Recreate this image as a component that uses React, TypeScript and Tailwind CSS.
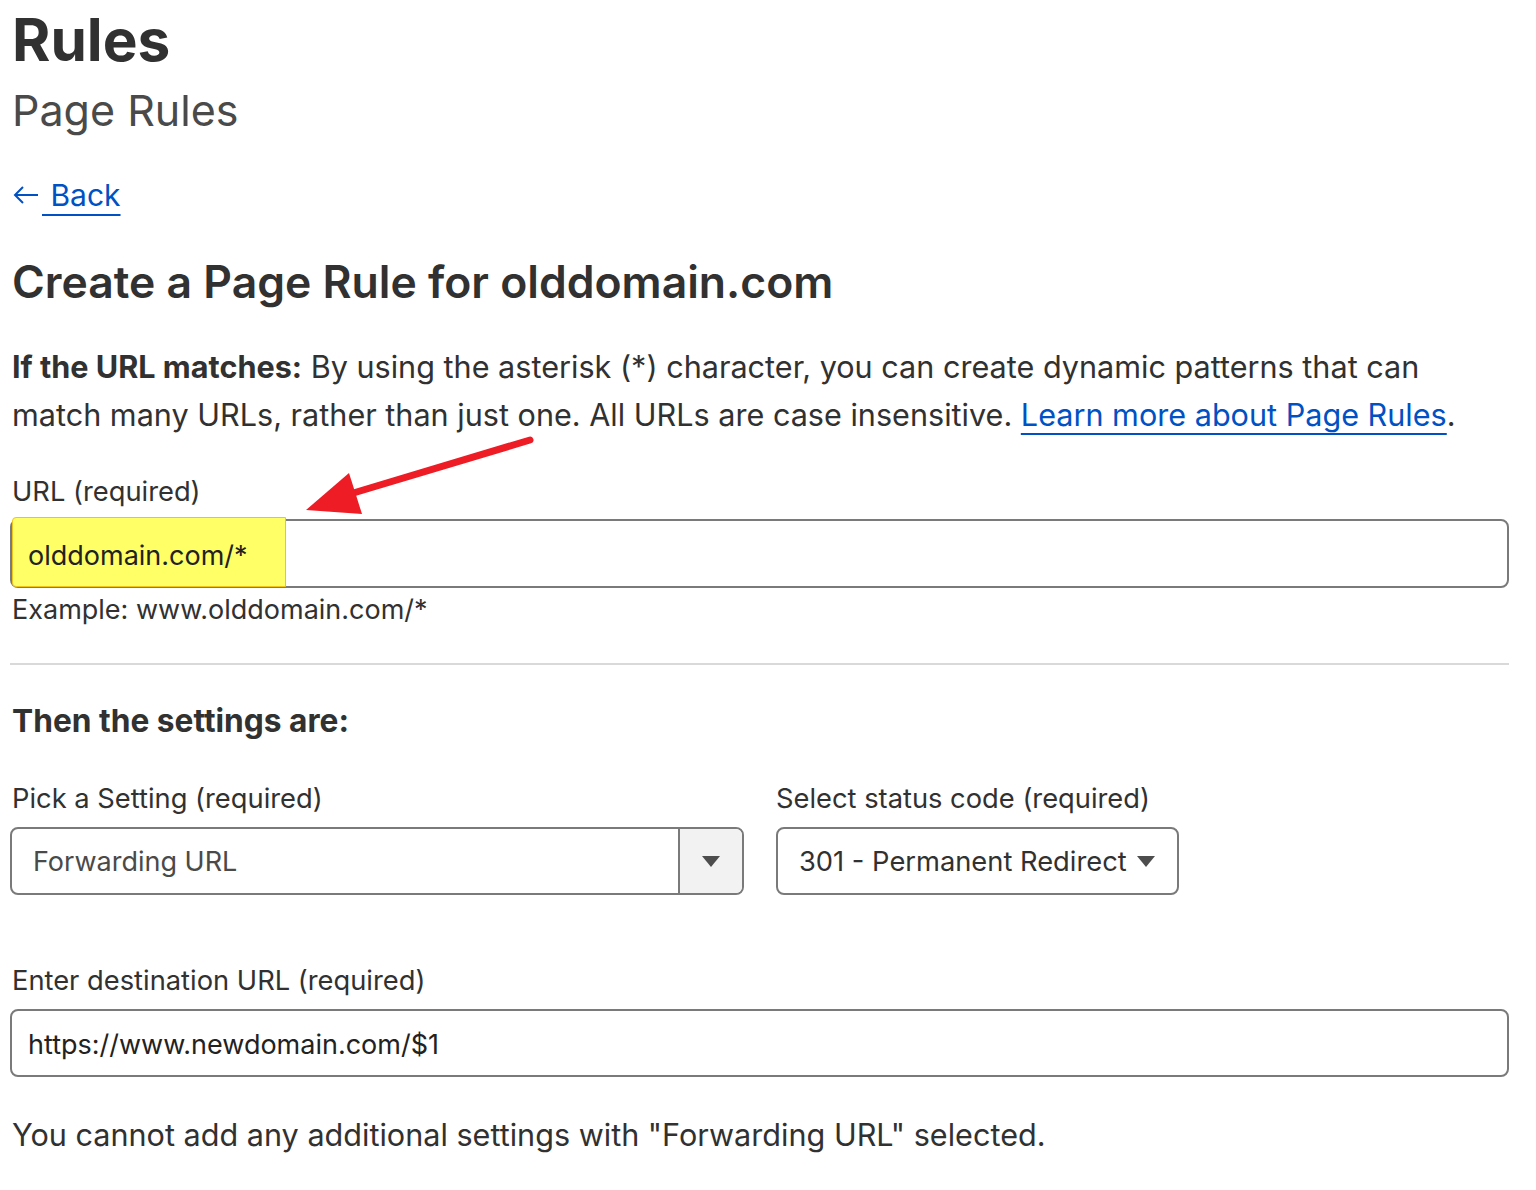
import React from "react";

function Tri({ className }: { className?: string }) {
  return (
    <svg width="18" height="11" viewBox="0 0 18 11" className={className}>
      <path d="M0 0 L18 0 L9 11 Z" fill="#4d4d4d" />
    </svg>
  );
}

export default function App() {
  return (
    <div
      className="relative w-[1536px] h-[1190px] bg-white text-[#313131] overflow-hidden"
      style={{ fontFamily: "Inter, 'Noto Sans', sans-serif" }}
    >
      <div className="pl-[10px] pr-[27px] pt-[8px]">
        <h1 className="text-[58.5px] leading-[64px] font-bold text-[#313131] pl-[2px]">Rules</h1>
        <div className="text-[43px] leading-[56px] text-[#4a4a4a] pl-[2px] mt-[10px]">Page Rules</div>

        <a className="mt-[40px] flex items-center text-[#0051c3] text-[30px] leading-[34px] pl-[2px] w-fit">
          <svg width="28" height="20" viewBox="0 0 28 20" className="shrink-0">
            <path d="M26 10 H3 M11 2 L3 10 L11 18" fill="none" stroke="#0051c3" strokeWidth="2" />
          </svg>
          <span className="underline decoration-2 underline-offset-[8px] pl-[2px] whitespace-pre">{" Back"}</span>
        </a>

        <h2 className="mt-[44px] text-[44.5px] leading-[52px] font-semibold text-[#313131] pl-[2px]">
          Create a Page Rule for olddomain.com
        </h2>

        <p className="mt-[35px] text-[30.6px] leading-[48px] pl-[2px]">
          <span className="font-bold">If the URL matches:</span> By using the asterisk (*) character, you can create dynamic patterns that can match many URLs, rather than just one. All URLs are case insensitive.{" "}
          <a className="text-[#0051c3] underline decoration-2 underline-offset-[7px]">Learn more about Page Rules</a>.
        </p>

        <div className="mt-[35px] text-[27.3px] leading-[36px] pl-[2px]">URL (required)</div>
        <div className="mt-[9px] relative h-[69px] rounded-[8px] border-2 border-[#7a7a7a] flex items-center">
          <div className="absolute left-[0px] top-[-4px] h-[70px] w-[274px] bg-[#ffff66] border border-[#f0c419] rounded-l-[4px]" />
          <span className="relative pl-[16px] pt-[5px] text-[27px] text-[#222]">olddomain.com/*</span>
        </div>
        <div className="mt-[3px] text-[27px] leading-[38px] pl-[2px]">Example: www.olddomain.com/*</div>

        <div className="mt-[34px] h-[2px] bg-[#d9d9d9]" />

        <h3 className="mt-[36px] text-[31.7px] leading-[40px] font-bold pl-[2px]">Then the settings are:</h3>

        <div className="mt-[40px] flex gap-[32px]">
          <div className="flex flex-col w-[734px]">
            <div className="text-[27.3px] leading-[36px] pl-[2px]">Pick a Setting (required)</div>
            <div className="mt-[10px] h-[68px] rounded-[8px] border-2 border-[#7a7a7a] flex overflow-hidden">
              <div className="flex-1 flex items-center pl-[21px] pt-[3px] text-[27px] text-[#4a4a4a]">Forwarding URL</div>
              <div className="w-[64px] bg-[#f2f2f2] border-l-2 border-[#7a7a7a] flex items-center justify-center">
                <Tri />
              </div>
            </div>
          </div>
          <div className="flex flex-col">
            <div className="text-[27.3px] leading-[36px]">Select status code (required)</div>
            <div className="mt-[10px] h-[68px] w-[403px] rounded-[8px] border-2 border-[#7a7a7a] flex items-center pl-[21px] text-[27.3px] text-[#313131]">
              <span className="pt-[3px]">301 - Permanent Redirect</span>
              <Tri className="ml-[10px]" />
            </div>
          </div>
        </div>

        <div className="mt-[68px] text-[27.3px] leading-[36px] pl-[2px]">Enter destination URL (required)</div>
        <div className="mt-[10px] h-[68px] rounded-[8px] border-2 border-[#7a7a7a] flex items-center pl-[16px] pt-[5px] text-[27px] text-[#222]">
          https://www.newdomain.com/$1
        </div>

        <p className="mt-[38px] text-[30.6px] leading-[40px] pl-[2px]">
          You cannot add any additional settings with "Forwarding URL" selected.
        </p>
      </div>

      <svg className="absolute left-0 top-0 pointer-events-none" width="1536" height="1190">
        <line x1="530" y1="440" x2="340" y2="497" stroke="#ee1c25" strokeWidth="7" strokeLinecap="round" />
        <path d="M306 510 L349 473 L362 514 Z" fill="#ee1c25" />
      </svg>
    </div>
  );
}
